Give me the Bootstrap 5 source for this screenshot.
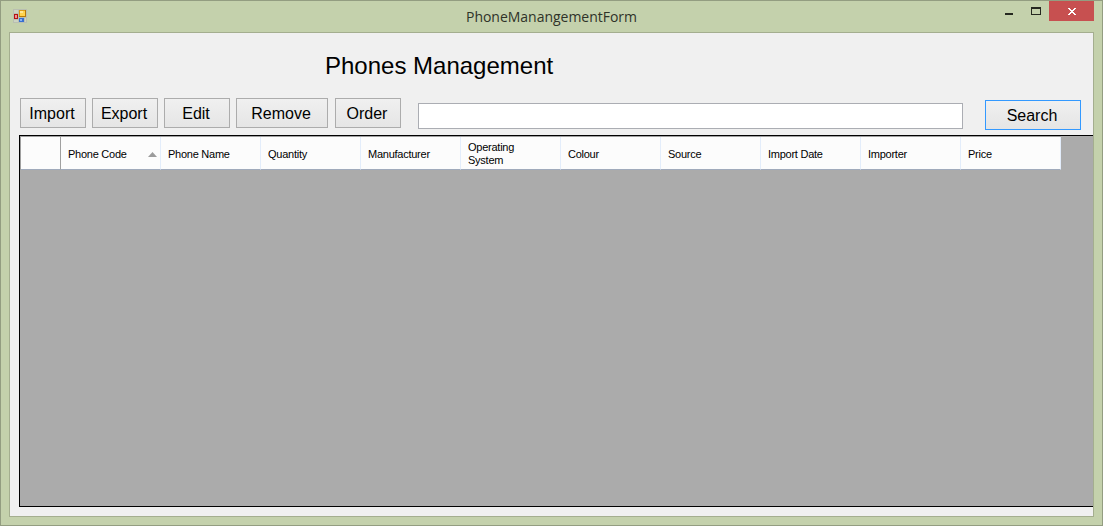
<!DOCTYPE html>
<html lang="en">
<head>
<meta charset="utf-8">
<meta name="viewport" content="width=device-width, initial-scale=1">
<title>PhoneManangementForm</title>
<link href="https://cdn.jsdelivr.net/npm/bootstrap@5.3.0/dist/css/bootstrap.min.css" rel="stylesheet">
<style>
body{font-family:"Liberation Sans",Arial,sans-serif;color:#000;background:#c4d1ac}
.win{height:526px;background:#c4d1ac;border:1px solid #939d81;padding:0 8px 8px}
.titlebar{height:31px}
.app-icon{margin:8px 0 0 4px}
.win-title{font-family:"Open Sans","Noto Sans",sans-serif;font-size:14px;line-height:20px;color:#2f3329;letter-spacing:-.02px;margin:6px 0 0 439px;width:180px;white-space:nowrap}
.win-close{width:45px;height:20px;background:#c75050}
.client{background:#f0f0f0;border:1px solid #a4ae8f;height:485px;padding:0 0 9px 9px}
.form-title{font-size:24px;line-height:28px;font-weight:400;margin:0;padding:19px 0 0 306px;height:65px}
.toolbar{height:37px;padding-left:1px}
.wbtn{font-size:16px;line-height:28px;height:30px;width:66px;padding:1px 2px 0 0;border:1px solid #acacac;border-radius:0;color:#000;background:linear-gradient(#f0f0f0,#e5e5e5);margin-right:6px}
.wbtn-wide{width:92px;margin-right:7px}
.wbtn-search{width:96px;border-color:#3399ff;margin:2px 0 0 22px}
.wbtn:hover{color:#000;background:#e5f1fb;border-color:#3399ff}
.search-box{width:545px;height:26px;min-height:0;margin:5px 0 0 11px;border:1px solid #abadb3;border-radius:0;padding:2px 4px;font-size:16px}
.gridview{background:#ababab;border:1px solid #000;border-right:0}
.gridview table{width:1041px;table-layout:fixed;border-collapse:separate;border-spacing:0;border-top:1px solid #a0a0a0;border-left:1px solid #a0a0a0;font-size:11px;line-height:13px;letter-spacing:-.25px}
.gridview th{height:33px;background:#fcfcfc;font-weight:400;padding:2px 7px 0;border-right:1px solid #e3edfb;border-bottom:1px solid #a0aabb;vertical-align:middle}
.gridview th.corner{width:40px;border-right-color:#a0a0a0}
.gridview th.two-line{padding-top:1px}
.gridview th.sorted{padding-right:3px}
.gridview th span{white-space:nowrap}
</style>
</head>
<body class="overflow-hidden">
<div class="win">
  <header class="titlebar d-flex align-items-start">
    <svg class="app-icon flex-shrink-0" width="14" height="14" viewBox="0 0 14 14" shape-rendering="crispEdges">
      <path d="M0 0h14v14H0z" fill="#b9bfb1"/><path d="M1 1h4v3H1zM1 11h4v2H1zM12 9h1v4h-1z" fill="#ccd3c2"/>
      <rect x="6" y="1" width="7" height="7" fill="#b77a08"/><rect x="6" y="1" width="6" height="6" fill="#dc9c16"/><rect x="7" y="2" width="5" height="5" fill="#ffd34d"/><rect x="7" y="2" width="3" height="2" fill="#ffe896"/>
      <rect x="1" y="5" width="4" height="5" fill="#b31313"/><rect x="2" y="6" width="2" height="3" fill="#f09090"/>
      <rect x="6" y="9" width="5" height="4" fill="#376fd0"/><rect x="7" y="10" width="2" height="2" fill="#86b1f5"/>
    </svg>
    <div class="win-title">PhoneManangementForm</div>
    <div class="d-flex ms-auto">
      <svg width="45" height="20" viewBox="0 0 45 20" shape-rendering="crispEdges"><path d="M1 12h8v2H1z" fill="#252820"/><path fill-rule="evenodd" d="M27 6h10v8H27zM28 8v5h8V8z" fill="#252820"/></svg>
      <div class="win-close"><svg class="d-block" width="45" height="20" viewBox="0 0 45 20" shape-rendering="crispEdges"><path d="M19 7h2v1h1v1h2V8h1V7h2v1h-1v1h-1v1h-1v1h1v1h1v1h1v1h-2v-1h-1v-1h-2v1h-1v1h-2v-1h1v-1h1v-1h1v-1h-1V9h-1V8h-1z" fill="#fff"/></svg></div>
    </div>
  </header>
  <main class="client d-flex flex-column">
    <h1 class="form-title">Phones Management</h1>
    <div class="toolbar d-flex align-items-start flex-shrink-0">
      <button class="btn wbtn" type="button">Import</button>
      <button class="btn wbtn" type="button">Export</button>
      <button class="btn wbtn" type="button">Edit</button>
      <button class="btn wbtn wbtn-wide" type="button">Remove</button>
      <button class="btn wbtn" type="button">Order</button>
      <input class="form-control search-box" type="text" aria-label="Search phones">
      <button class="btn wbtn wbtn-search" type="button">Search</button>
    </div>
    <div class="gridview flex-grow-1">
      <table>
        <thead><tr>
          <th class="corner"></th>
          <th class="sorted"><div class="d-flex align-items-center justify-content-between"><span>Phone Code</span><svg width="9" height="5" viewBox="0 0 9 5"><path d="M4.500 0L9 5H0z" fill="#9c9c9c"/></svg></div></th>
          <th><span>Phone Name</span></th>
          <th><span>Quantity</span></th>
          <th><span>Manufacturer</span></th>
          <th class="two-line"><span>Operating<br>System</span></th>
          <th><span>Colour</span></th>
          <th><span>Source</span></th>
          <th><span>Import Date</span></th>
          <th><span>Importer</span></th>
          <th><span>Price</span></th>
        </tr></thead>
      </table>
    </div>
  </main>
</div>
<script src="https://cdn.jsdelivr.net/npm/bootstrap@5.3.0/dist/js/bootstrap.bundle.min.js"></script>
</body>
</html>
